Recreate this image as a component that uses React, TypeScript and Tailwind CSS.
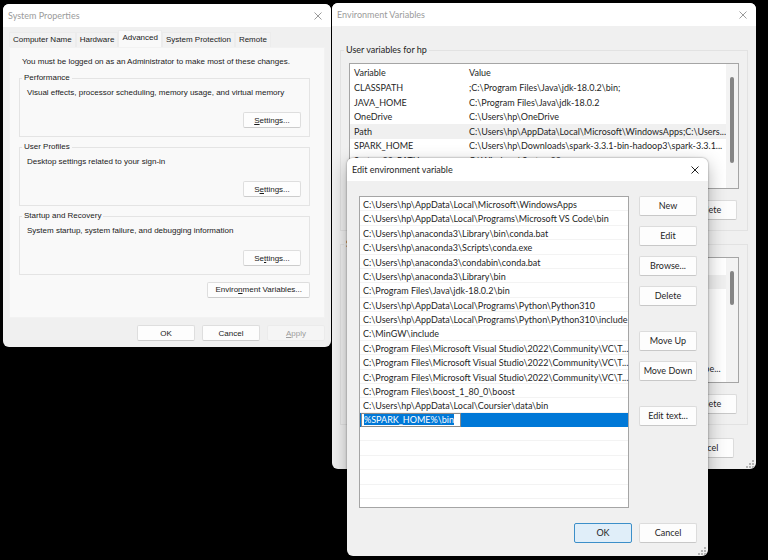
import { useEffect, useRef, type ReactNode } from "react";

const dialogButton =
  "h-5 w-[58px] shrink-0 rounded-[2px] border border-[#dcdcdc] border-b-[#c8c8c8] bg-[#fdfdfd] text-center text-[9px] leading-[18px] whitespace-nowrap text-[#1f1f1f]";
const classicButton =
  "h-4 w-[58px] shrink-0 rounded-[2px] border border-[#dedede] border-b-[#cccccc] bg-[#fdfdfd] pt-px text-center text-[8px] leading-[14px] whitespace-nowrap text-[#1a1a1a]";

function CloseButton({ className }: { className: string }) {
  return (
    <button type="button" aria-label="Close" className={`flex size-5 items-center justify-center ${className}`}>
      <svg viewBox="0 0 8 8" className="size-2" fill="none" stroke="currentColor" strokeWidth="1">
        <path d="M0.5 0.5 7.5 7.5M7.5 0.5 0.5 7.5" />
      </svg>
    </button>
  );
}

function Grip() {
  return (
    <svg viewBox="0 0 8 8" className="absolute right-[2px] bottom-px size-2 fill-[#b4b4b4]">
      <path d="M6 0h2v2H6zM3 3h2v2H3zM6 3h2v2H6zM0 6h2v2H0zM3 6h2v2H3zM6 6h2v2H6z" />
    </svg>
  );
}

function TitleBar({ title, active = false }: { title: string; active?: boolean }) {
  return (
    <header className="flex h-[23px] items-center justify-between bg-white pr-[3px] pl-[5px]">
      <h2 className={`text-[9px] leading-4 ${active ? "text-[#1f1f1f]" : "text-[#9b9b9b]"}`}>{title}</h2>
      <CloseButton className={active ? "text-[#1f1f1f]" : "text-[#9b9b9b]"} />
    </header>
  );
}

const tabs = ["Computer Name", "Hardware", "Advanced", "System Protection", "Remote"];

const groups: { name: string; text: string; label: ReactNode }[] = [
  {
    name: "Performance",
    text: "Visual effects, processor scheduling, memory usage, and virtual memory",
    label: <><u>S</u>ettings...</>,
  },
  { name: "User Profiles", text: "Desktop settings related to your sign-in", label: <>S<u>e</u>ttings...</> },
  {
    name: "Startup and Recovery",
    text: "System startup, system failure, and debugging information",
    label: <>Se<u>t</u>tings...</>,
  },
];

function SystemProperties() {
  return (
    <section className="absolute top-1 left-[3px] w-[328px] overflow-hidden rounded-md bg-[#f0f0f0] pb-[6px] font-['Lato','Open_Sans',sans-serif]">
      <TitleBar title="System Properties" />
      <div className="px-[6px] pt-[3px] font-['Liberation_Sans',Arial,sans-serif] text-[8px] leading-3 text-[#1a1a1a]">
        <div role="tablist" className="flex items-end">
          {tabs.map((tab) =>
            tab === "Advanced" ? (
              <button
                key={tab}
                type="button"
                role="tab"
                aria-selected="true"
                className="h-[17px] border border-b-0 border-[#ececec] bg-[#f9f9f9] px-[3px] pb-[2px] leading-3"
              >
                {tab}
              </button>
            ) : (
              <button
                key={tab}
                type="button"
                role="tab"
                aria-selected="false"
                className="h-[15px] border border-b-0 border-[#ececec] bg-[#f2f2f2] px-[3px] pb-px leading-3"
              >
                {tab}
              </button>
            ),
          )}
        </div>
        <div role="tabpanel" className="border border-[#f2f2f2] bg-[#f9f9f9] pt-2 pr-[14px] pb-[19px] pl-[9px]">
          <p className="pb-1 pl-[3px]">You must be logged on as an Administrator to make most of these changes.</p>
          <div className="flex flex-col gap-1">
            {groups.map((group) => (
              <fieldset key={group.name} className="h-[65px] border border-[#e4e4e4] pr-2">
                <legend className="ml-[2px] px-[2px]">{group.name}</legend>
                <p className="pt-[3px] pl-[7px]">{group.text}</p>
                <div className="flex justify-end pt-[13px]">
                  <button type="button" className={classicButton}>{group.label}</button>
                </div>
              </fieldset>
            ))}
          </div>
          <div className="flex justify-end pt-[7px]">
            <button
              type="button"
              className="h-4 rounded-[2px] border border-[#dedede] border-b-[#cccccc] bg-[#fdfdfd] px-[7px] leading-[14px]"
            >
              Enviro<u>n</u>ment Variables...
            </button>
          </div>
        </div>
        <div className="flex justify-end gap-[7px] pt-[7px]">
          <button type="button" className={classicButton}>OK</button>
          <button type="button" className={classicButton}>Cancel</button>
          <button
            type="button"
            disabled
            className="h-4 w-[58px] rounded-[2px] border border-[#ebebeb] bg-[#f5f5f5] pt-px leading-[14px] text-[#9d9d9d]"
          >
            <u>A</u>pply
          </button>
        </div>
      </div>
    </section>
  );
}

type Variable = [name: string, value: string];

const userVariables: Variable[] = [
  ["CLASSPATH", ";C:\\Program Files\\Java\\jdk-18.0.2\\bin;"],
  ["JAVA_HOME", "C:\\Program Files\\Java\\jdk-18.0.2"],
  ["OneDrive", "C:\\Users\\hp\\OneDrive"],
  ["Path", "C:\\Users\\hp\\AppData\\Local\\Microsoft\\WindowsApps;C:\\Users..."],
  ["SPARK_HOME", "C:\\Users\\hp\\Downloads\\spark-3.3.1-bin-hadoop3\\spark-3.3.1..."],
  ["System32_PATH", "C:\\Windows\\System32"],
];

const systemVariables: Variable[] = [
  ["ComSpec", "C:\\WINDOWS\\system32\\cmd.exe"],
  ["DriverData", "C:\\Windows\\System32\\Drivers\\DriverData"],
  ["HADOOP_HOME", "C:\\hadoop"],
  ["NUMBER_OF_PROCESSORS", "8"],
  ["OnlineServices", "Online Services"],
  ["OS", "Windows_NT"],
  ["Path", "C:\\Program Files\\Common Files\\Oracle\\Java\\javapath;C:\\Pipe..."],
];

function VariableGroup({
  title,
  rows,
  selected,
  thumb,
}: {
  title: string;
  rows: Variable[];
  selected: string;
  thumb: string;
}) {
  return (
    <fieldset className="border border-[#e2e2e2] px-2 pb-[10px]">
      <legend className="-ml-[5px] px-[2px] leading-4">{title}</legend>
      <div className="mt-[5px] flex h-[126px] border border-[#a5a5a5] bg-white">
        <div className="min-w-0 flex-1 overflow-hidden">
          <table className="w-full table-fixed border-collapse text-left leading-[14px]">
            <thead>
              <tr className="h-[17px]">
                <th className="w-[116px] pl-1 font-normal">Variable</th>
                <th className="pl-[3px] font-normal">Value</th>
              </tr>
            </thead>
            <tbody>
              {rows.map(([name, value], index) => (
                <tr
                  key={name}
                  className={`${index % 2 ? "h-[15px]" : "h-[14px]"} ${name === selected ? "bg-[#f0f0f0]" : ""}`}
                >
                  <td className="pl-1 whitespace-nowrap">{name}</td>
                  <td className="pl-[3px] whitespace-nowrap">{value}</td>
                </tr>
              ))}
            </tbody>
          </table>
        </div>
        <div className="w-3 bg-[#f3f3f3] px-1 pt-[13px]">
          <div className={`w-1 rounded-sm bg-[#858585] ${thumb}`} />
        </div>
      </div>
      <div className="flex justify-end gap-[6px] pt-[11px] pr-[2px]">
        <button type="button" className={dialogButton}>New...</button>
        <button type="button" className={dialogButton}>Edit...</button>
        <button type="button" className={dialogButton}>Delete</button>
      </div>
    </fieldset>
  );
}

function EnvironmentVariables() {
  return (
    <section className="absolute top-[3px] left-[332px] w-[424px] overflow-hidden rounded-md bg-[#f0f0f0] pb-[11px] font-['Lato','Open_Sans',sans-serif] text-[9px] text-[#1f1f1f]">
      <TitleBar title="Environment Variables" />
      <div className="flex flex-col gap-[5px] px-2 pt-4">
        <VariableGroup title="User variables for hp" rows={userVariables} selected="Path" thumb="h-[86px]" />
        <VariableGroup title="System variables" rows={systemVariables} selected="ComSpec" thumb="h-[34px]" />
      </div>
      <div className="flex justify-end gap-[6px] pt-[13px] pr-[22px]">
        <button type="button" className={dialogButton}>OK</button>
        <button type="button" className={dialogButton}>Cancel</button>
      </div>
      <Grip />
    </section>
  );
}

const paths = [
  "C:\\Users\\hp\\AppData\\Local\\Microsoft\\WindowsApps",
  "C:\\Users\\hp\\AppData\\Local\\Programs\\Microsoft VS Code\\bin",
  "C:\\Users\\hp\\anaconda3\\Library\\bin\\conda.bat",
  "C:\\Users\\hp\\anaconda3\\Scripts\\conda.exe",
  "C:\\Users\\hp\\anaconda3\\condabin\\conda.bat",
  "C:\\Users\\hp\\anaconda3\\Library\\bin",
  "C:\\Program Files\\Java\\jdk-18.0.2\\bin",
  "C:\\Users\\hp\\AppData\\Local\\Programs\\Python\\Python310",
  "C:\\Users\\hp\\AppData\\Local\\Programs\\Python\\Python310\\include",
  "C:\\MinGW\\include",
  "C:\\Program Files\\Microsoft Visual Studio\\2022\\Community\\VC\\T...",
  "C:\\Program Files\\Microsoft Visual Studio\\2022\\Community\\VC\\T...",
  "C:\\Program Files\\Microsoft Visual Studio\\2022\\Community\\VC\\T...",
  "C:\\Program Files\\boost_1_80_0\\boost",
  "C:\\Users\\hp\\AppData\\Local\\Coursier\\data\\bin",
];

function EditVariable() {
  const field = useRef<HTMLInputElement>(null);
  useEffect(() => {
    field.current?.focus();
    field.current?.select();
  }, []);

  return (
    <section className="absolute top-[158px] left-[347px] w-[361px] rounded-md bg-[#f0f0f0] pb-[13px] font-['Lato','Open_Sans',sans-serif] text-[9px] text-[#1f1f1f] shadow-[0_6px_18px_rgba(0,0,0,0.3),0_0_2px_rgba(0,0,0,0.5)]">
      <div className="overflow-hidden rounded-t-md">
        <TitleBar title="Edit environment variable" active />
      </div>
      <div className="flex gap-[10px] pt-[15px] pr-[11px] pl-3">
        <div className="h-[312px] min-w-0 flex-1 border border-[#a5a5a5] bg-white">
          <ul className="grid h-[302px] auto-rows-fr grid-cols-1">
            {paths.map((path, index) => (
              <li key={index} className="min-h-0 border-b border-[#f3f3f3] pl-[3px] leading-[15px] whitespace-nowrap">
                {path}
              </li>
            ))}
            <li className="flex min-h-0 bg-[#0078d7] pl-px">
              <input
                ref={field}
                aria-label="New path"
                defaultValue="%SPARK_HOME%\bin"
                className="h-full w-[100px] border border-[#8a8a8a] bg-white px-[2px] leading-3 outline-none selection:bg-[#0078d7] selection:text-white"
              />
            </li>
            {Array.from({ length: 5 }, (_, index) => (
              <li key={index} className="min-h-0 border-b border-[#f3f3f3]" />
            ))}
          </ul>
        </div>
        <div className="flex flex-col gap-[25px]">
          <div className="flex flex-col gap-[10px]">
            <button type="button" className={dialogButton}>New</button>
            <button type="button" className={dialogButton}>Edit</button>
            <button type="button" className={dialogButton}>Browse...</button>
            <button type="button" className={dialogButton}>Delete</button>
          </div>
          <div className="flex flex-col gap-[10px]">
            <button type="button" className={dialogButton}>Move Up</button>
            <button type="button" className={dialogButton}>Move Down</button>
          </div>
          <button type="button" className={dialogButton}>Edit text...</button>
        </div>
      </div>
      <div className="flex justify-end gap-[7px] pt-[15px] pr-[11px]">
        <button
          type="button"
          className="h-5 w-[58px] rounded-[2px] border border-[#3c8fc9] bg-[#e0eef9] text-center leading-[18px]"
        >
          OK
        </button>
        <button type="button" className={dialogButton}>Cancel</button>
      </div>
      <Grip />
    </section>
  );
}

export default function App() {
  return (
    <main className="relative h-screen min-h-[560px] overflow-hidden bg-black">
      <SystemProperties />
      <EnvironmentVariables />
      <EditVariable />
    </main>
  );
}
